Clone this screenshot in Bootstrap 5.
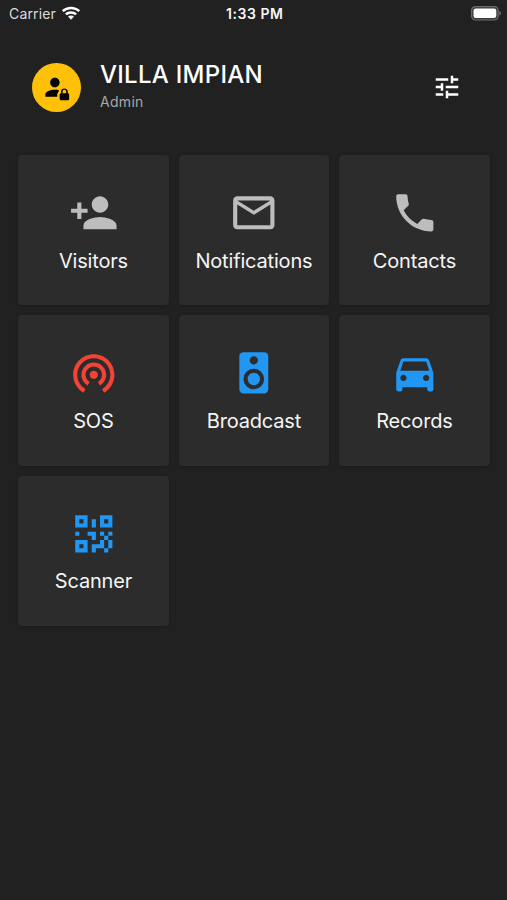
<!DOCTYPE html>
<html lang="en" data-bs-theme="dark">
<head>
<meta charset="utf-8">
<meta name="viewport" content="width=device-width, initial-scale=1">
<title>Villa Impian</title>
<link href="https://cdn.jsdelivr.net/npm/bootstrap@5.3.0/dist/css/bootstrap.min.css" rel="stylesheet">
<style>
body{background:#212121;color:#f5f5f5;font-family:Inter,"Liberation Sans",sans-serif;min-height:900px;line-height:1}
svg{display:block;fill:currentColor;flex:none}
.status-bar{height:27px;padding:0 6.5px 0 9px;font-size:14px}
.status-bar>div{flex:1 1 0}
.carrier{color:#dcdcdc;letter-spacing:.15px}
.wifi{margin-left:5px}
.clock{font-weight:600;font-size:14px;letter-spacing:.55px;color:#f7f7f7}
.profile{height:128px;padding:8px 45px 16px 31.5px}
.avatar{width:49px;height:49px;background:#ffc107;color:#000;padding-left:2.5px}
.who{margin-left:19.5px;padding-bottom:2px}
.villa{font-size:24px;font-weight:500;letter-spacing:.27px;line-height:28px;margin:0}
.role{font-size:14px;line-height:18px;letter-spacing:.3px;color:#a8a8a8;margin-top:4px}
.tiles{display:grid;grid-template-columns:repeat(3,150.5px);grid-auto-rows:150.4px;gap:10px;padding-left:18.2px}
.tile{background:#2c2c2c;border:0;border-radius:4px;box-shadow:0 1px 3px rgba(0,0,0,.22);color:#f5f5f5;text-decoration:none;padding-top:33px}
.tile svg{width:49.6px;height:49.6px}
.tile-label{font-size:20px;line-height:24px;margin-top:11px;letter-spacing:-.17px;white-space:nowrap}
.ico-grey{color:#bdbdbd}.ico-red{color:#f44336}.ico-blue{color:#2196f3}
</style>
<script src="https://cdn.jsdelivr.net/npm/bootstrap@5.3.0/dist/js/bootstrap.bundle.min.js"></script>
</head>
<body>
<div class="status-bar d-flex align-items-center">
  <div class="d-flex align-items-center carrier"><span>Carrier</span>
    <svg class="wifi text-white" width="20" height="15" viewBox="0 0 20 15"><path d="M10 .8C6.500.8 3.300 2.100.9 4.300l1.700 1.800A10.800 10.800 0 0 1 10 3.200c2.900 0 5.500 1.100 7.400 2.900l1.700-1.800A13.400 13.400 0 0 0 10 .8zM10 5.200c-2.300 0-4.400.9-6 2.300l1.800 1.800a6.200 6.200 0 0 1 8.400 0L16 7.500a8.900 8.900 0 0 0-6-2.300zM10 9.400c-1.200 0-2.200.4-3 1.100l3 3.200 3-3.200c-.8-.7-1.800-1.100-3-1.100z"/></svg>
  </div>
  <span class="clock">1:33 PM</span>
  <div class="d-flex justify-content-end">
    <svg width="30" height="15" viewBox="0 0 30 15"><rect x=".6" y=".6" width="26.600" height="13.400" rx="4" fill="#3a3a3a" stroke="#6c6c6c" stroke-width="1.200"/><rect x="2.500" y="2.500" width="22.800" height="9.600" rx="2.300" fill="#fff"/><path d="M28.300 5c1.200.4 1.700 1.200 1.700 2.300s-.5 1.900-1.700 2.300z" fill="#6c6c6c"/></svg>
  </div>
</div>
<header class="profile d-flex align-items-center">
  <div class="avatar rounded-circle d-flex align-items-center justify-content-center">
    <svg width="28.500" height="28.500" viewBox="0 0 24 24"><path d="M6 8C6 5.790 7.790 4 10 4S14 5.790 14 8 12.210 12 10 12 6 10.210 6 8M12 18.200C12 17.240 12.500 16.340 13.200 15.740V15.500C13.200 15.110 13.270 14.740 13.380 14.380C12.350 14.140 11.210 14 10 14C5.580 14 2 15.790 2 18V20H12V18.200M22 18.300V21.800C22 22.400 21.400 23 20.700 23H15.200C14.600 23 14 22.400 14 21.700V18.200C14 17.600 14.600 17 15.200 17V15.500C15.200 14.100 16.600 13 18 13S20.800 14.100 20.800 15.500V17C21.400 17 22 17.600 22 18.300M19.500 15.500C19.500 14.700 18.800 14.200 18 14.200S16.500 14.700 16.500 15.500V17H19.500V15.500Z"/></svg>
  </div>
  <div class="who flex-grow-1">
    <h1 class="villa">VILLA IMPIAN</h1>
    <div class="role">Admin</div>
  </div>
  <svg class="text-white" width="30" height="30" viewBox="0 0 24 24"><path d="M3 17v2h6v-2H3zM3 5v2h10V5H3zm10 16v-2h8v-2h-8v-2h-2v6h2zM7 9v2H3v2h4v2h2V9H7zm14 4v-2H11v2h10zm-6-4h2V7h4V5h-4V3h-2v6z"/></svg>
</header>
<main class="tiles">
  <a href="#" class="tile card align-items-center">
    <svg class="ico-grey" viewBox="0 0 24 24"><path d="M15 12c2.210 0 4-1.790 4-4s-1.790-4-4-4-4 1.790-4 4 1.790 4 4 4zm-9-2V7H4v3H1v2h3v3h2v-3h3v-2H6zm9 4c-2.670 0-8 1.340-8 4v2h16v-2c0-2.660-5.330-4-8-4z"/></svg>
    <span class="tile-label">Visitors</span>
  </a>
  <a href="#" class="tile card align-items-center">
    <svg class="ico-grey" viewBox="0 0 24 24"><path d="M20 4H4c-1.100 0-1.990.9-1.990 2L2 18c0 1.100.9 2 2 2h16c1.100 0 2-.9 2-2V6c0-1.100-.9-2-2-2zm0 14H4V8l8 5 8-5v10zm-8-7L4 6h16l-8 5z"/></svg>
    <span class="tile-label">Notifications</span>
  </a>
  <a href="#" class="tile card align-items-center">
    <svg class="ico-grey" viewBox="0 0 24 24"><path d="M6.540 3H4c-.55 0-1 .45-1 1 0 9.390 7.610 17 17 17 .55 0 1-.45 1-1v-3.490c0-.55-.45-1-1-1-1.240 0-2.450-.2-3.570-.57-.35-.11-.74-.03-1.020.24l-2.200 2.200c-2.830-1.440-5.150-3.750-6.590-6.590l2.200-2.210c.28-.26.36-.65.25-1C8.700 6.450 8.500 5.250 8.500 4c0-.55-.45-1-1-1z"/></svg>
    <span class="tile-label">Contacts</span>
  </a>
  <a href="#" class="tile card align-items-center">
    <svg class="ico-red" viewBox="0 0 24 24"><path d="M12 11c-1.100 0-2 .9-2 2s.9 2 2 2 2-.9 2-2-.9-2-2-2zm6 2c0-3.310-2.690-6-6-6s-6 2.690-6 6c0 2.220 1.210 4.150 3 5.190l1-1.740c-1.190-.7-2-1.970-2-3.450 0-2.210 1.790-4 4-4s4 1.790 4 4c0 1.480-.81 2.750-2 3.450l1 1.740c1.790-1.040 3-2.970 3-5.190zM12 3C6.480 3 2 7.480 2 13c0 3.700 2.010 6.920 4.990 8.650l1-1.730C5.610 18.530 4 15.960 4 13c0-4.420 3.580-8 8-8s8 3.580 8 8c0 2.960-1.610 5.530-4 6.920l1 1.730c2.990-1.730 5-4.950 5-8.650 0-5.520-4.480-10-10-10z"/></svg>
    <span class="tile-label">SOS</span>
  </a>
  <a href="#" class="tile card align-items-center">
    <svg class="ico-blue" viewBox="0 0 24 24"><path d="M12 12a3 3 0 0 0-3 3 3 3 0 0 0 3 3 3 3 0 0 0 3-3 3 3 0 0 0-3-3m0 8a5 5 0 0 1-5-5 5 5 0 0 1 5-5 5 5 0 0 1 5 5 5 5 0 0 1-5 5m0-16a2 2 0 0 1 2 2 2 2 0 0 1-2 2 2 2 0 0 1-2-2 2 2 0 0 1 2-2m5-2H7a2 2 0 0 0-2 2v16a2 2 0 0 0 2 2h10a2 2 0 0 0 2-2V4a2 2 0 0 0-2-2z"/></svg>
    <span class="tile-label">Broadcast</span>
  </a>
  <a href="#" class="tile card align-items-center">
    <svg class="ico-blue" viewBox="0 0 24 24"><path d="M18.920 6.010C18.720 5.420 18.160 5 17.500 5h-11c-.66 0-1.210.42-1.420 1.010L3 12v8c0 .55.45 1 1 1h1c.55 0 1-.45 1-1v-1h12v1c0 .55.45 1 1 1h1c.55 0 1-.45 1-1v-8l-2.080-5.990zM6.500 16c-.83 0-1.500-.67-1.500-1.500S5.670 13 6.500 13s1.500.67 1.500 1.500S7.330 16 6.500 16zm11 0c-.83 0-1.500-.67-1.500-1.500s.67-1.500 1.500-1.500 1.500.67 1.500 1.500-.67 1.500-1.500 1.500zM5 11l1.500-4.500h11L19 11H5z"/></svg>
    <span class="tile-label">Records</span>
  </a>
  <a href="#" class="tile card align-items-center">
    <svg class="ico-blue" viewBox="0 0 24 24"><path d="M3 11h2v2H3v-2m8-6h2v4h-2V5m-2 6h4v4h-2v-2H9v-2m6 0h2v2h2v-2h2v2h-2v2h2v4h-2v2h-2v-2h-4v2h-2v-4h4v-2h2v-2h-2v-2m4 8v-4h-2v4h2M15 3h6v6h-6V3m2 2v2h2V5h-2M3 3h6v6H3V3m2 2v2h2V5H5M3 15h6v6H3v-6m2 2v2h2v-2H5z"/></svg>
    <span class="tile-label">Scanner</span>
  </a>
</main>
</body>
</html>
